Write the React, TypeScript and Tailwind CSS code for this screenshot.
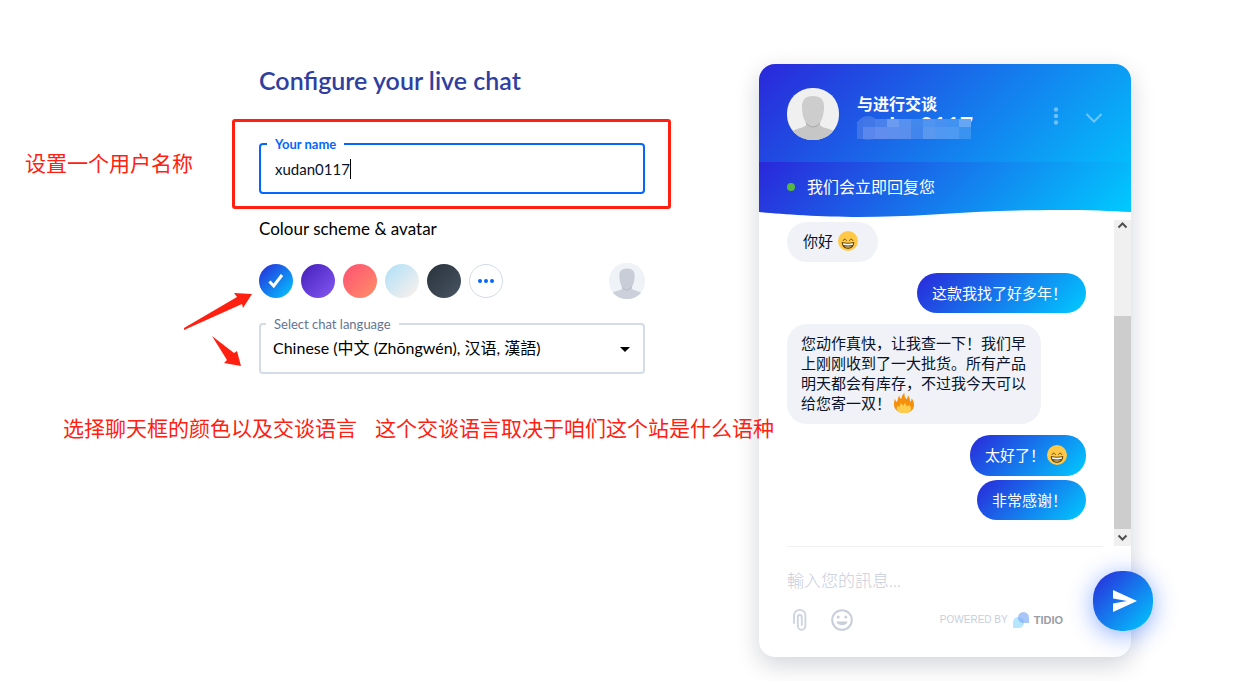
import { ReactNode } from 'react';

const GRADIENT = 'bg-[linear-gradient(135deg,#2a27da_0%,#00ccff_100%)]';

function GrinEmoji() {
  return (
    <svg viewBox="0 0 20 20" className="h-5 w-5 shrink-0" role="img" aria-label="笑脸">
      <circle cx="10" cy="10" r="10" fill="#ffc947" />
      <path d="M5.200 9.400c.5-1.700 2.600-1.700 3.200 0M11.600 9.400c.6-1.700 2.700-1.700 3.200 0" fill="none" stroke="#664500" strokeWidth="1" strokeLinecap="round" />
      <path d="M3.800 11c3.600.9 8.800.9 12.400 0 .2 4.200-2.400 6.800-6.200 6.800s-6.400-2.600-6.200-6.800z" fill="#664500" />
      <path d="M4.900 12.200c3.200.6 7 .6 10.200 0l-.5 1.900c-3 .5-6.200.5-9.200 0z" fill="#fff" />
      <path d="M6.400 15.200c2.400.4 4.800.4 7.200 0-1.600 1.800-5.600 1.800-7.200 0z" fill="#e8d9bd" />
    </svg>
  );
}

function FireEmoji() {
  return (
    <svg viewBox="0 0 20 20" className="h-5 w-5 shrink-0" role="img" aria-label="火">
      <path d="M10 20C4 20 0 16.500 0 11.600 0 9.500.2 7.500 1 5.600c.3 1.700.9 2.900 2 3.500C4 7 3.400 4.600 5.400 2.400c.1 1.600.7 3 1.800 3.400C8.200 4.500 7.600 1.800 10.600 0c-.5 2.600.3 4.400 1.900 6.200 1-1 1.400-2.300 1.200-4 2 1.700 2.300 4.200 2.300 6.600 1.200-.6 1.600-1.800 1.600-3.400C19.300 7 20 9.500 20 12c0 4.800-4 8-10 8z" fill="#f4900c" />
      <path d="M10 20c-4 0-7.300-1.600-7.300-4.600 0-1.200.4-2.200 1.100-3 .4.900 1 1.300 1.900 1.300.1-1.600.3-2.800 1.500-3.800.4 1.300 1.200 2 2.300 2.500.7-.7 1-1.500.9-2.400 1.400.9 2.200 2.200 2.400 3.600.9-.2 1.500-.7 1.900-1.600 1.400 1 2.500 2 2.500 3.400 0 3-3.200 4.600-7.200 4.600z" fill="#ffcc4d" />
    </svg>
  );
}

function Person({ bg, head, body, className }: { bg: string; head: string; body: string; className: string }) {
  return (
    <svg viewBox="0 0 52 52" className={className} aria-hidden="true">
      <clipPath id={'clip' + head.slice(1)}>
        <rect width="52" height="52" rx="25" />
      </clipPath>
      <g clipPath={`url(#clip${head.slice(1)})`}>
        <rect width="52" height="52" fill={bg} />
        <path d="M5 43c6-3 12-3 14-6v-5h14v5c2 3 8 3 14 6v9H5z" fill={body} />
        <path d="M26 8c8 0 11.500 4 11 12-.4 7-1.500 11-4 14.500-3 5-11 5-14 0C16.500 31 15.400 27 15 20 14.500 12 18 8 26 8z" fill={head} />
        <path d="M19 34.500c4 6 10 6 14 0" fill="none" stroke="#000" strokeOpacity=".15" />
      </g>
    </svg>
  );
}

function Received({ children }: { children: ReactNode }) {
  return <div className="max-w-[254px] self-start rounded-[20px] bg-[#f0f2f7] px-[14px] pt-[9px] pb-[11px] text-[15px] leading-5 text-[#06132b]">{children}</div>;
}

function Sent({ children }: { children: ReactNode }) {
  return <div className={`${GRADIENT} flex min-h-10 items-center gap-[2px] self-end rounded-[20px] pr-[19px] pb-px pl-[15px] text-[15px] leading-5 text-white`}>{children}</div>;
}

const swatches = [
  { name: 'Violet', css: 'bg-[linear-gradient(135deg,#431dba,#855af2)]' },
  { name: 'Coral', css: 'bg-[linear-gradient(135deg,#ff5073,#ff9068)]' },
  { name: 'Sky', css: 'bg-[linear-gradient(135deg,#ace0f9,#fff1eb)]' },
  { name: 'Slate', css: 'bg-[linear-gradient(135deg,#29323c,#485563)]' },
];

const mosaicTop = ['#4277e8', '#4a80ea', '#6b9bf1', '#5890ef', '#4288ed', '#4f94f0', '#4891f0', '#4292f1', '#65a6f5'];
const mosaicBottom = ['#5b86ec', '#628dee', '#5f8fee', '#5a8fee', '#4285ec', '#5a98f0', '#5098f1', '#4c9af2', '#3a92f1'];

function ConfigForm() {
  return (
    <form className="w-[439px]" onSubmit={(e) => e.preventDefault()}>
      <h1 className="pl-[27px] text-[25px] leading-8 font-semibold text-[#303f9f]">Configure your live chat</h1>
      <div className="mt-[23px] rounded-[3px] border-3 border-[#ff2011] pt-[13px] pr-[23px] pb-3 pl-6">
        <fieldset className="h-[59px] rounded-[4px] border-2 border-[#0566ff] px-[6px]">
          <legend className="px-2 text-[13px] leading-[18px] font-bold text-[#0566ff]">
            <label htmlFor="name">Your name</label>
          </legend>
          <div className="flex items-center px-2 pt-1">
            <input id="name" defaultValue="xudan0117" autoComplete="off" className="field-sizing-content bg-transparent text-[15px] leading-6 text-[#06132b] outline-none" />
            <span className="h-5 w-px bg-black" />
          </div>
        </fieldset>
      </div>
      <div className="pr-[26px] pl-[27px]">
        <h2 className="mt-2 text-[17px] leading-6 text-black">Colour scheme &amp; avatar</h2>
        <div className="mt-[22px] flex items-center gap-2">
          <button type="button" aria-label="Blue" className={`${GRADIENT} flex h-[34px] w-[34px] items-center justify-center rounded-full`}>
            <svg viewBox="0 0 16 16" className="h-4 w-4" fill="none" stroke="#fff" strokeWidth="3">
              <path d="M1.500 8.500l4.200 4.500L14 2" />
            </svg>
          </button>
          {swatches.map((s) => (
            <button key={s.name} type="button" aria-label={s.name} className={`${s.css} h-[34px] w-[34px] rounded-full`} />
          ))}
          <button type="button" aria-label="More colours" className="flex h-[34px] w-[34px] items-center justify-center gap-[2px] rounded-full border border-[#d3dbe5]">
            <span className="h-1 w-1 rounded-full bg-[#0566ff]" />
            <span className="h-1 w-1 rounded-full bg-[#0566ff]" />
            <span className="h-1 w-1 rounded-full bg-[#0566ff]" />
          </button>
          <button type="button" aria-label="Avatar" className="ml-auto">
            <Person bg="#eff2f6" head="#c8cdd7" body="#cbd0da" className="h-9 w-9" />
          </button>
        </div>
        <fieldset className="relative mt-4 h-[59px] rounded-[4px] border-2 border-[#d3dbe5] px-[5px]">
          <legend className="px-2 text-[13px] leading-[18px] text-[#647491]">
            <label htmlFor="language">Select chat language</label>
          </legend>
          <select id="language" className="mt-[3px] w-full appearance-none bg-transparent px-[7px] text-base leading-6 text-black outline-none">
            <option>Chinese (中文 (Zhōngwén), 汉语, 漢語)</option>
          </select>
          <svg viewBox="0 0 10 5" className="pointer-events-none absolute top-[14px] right-[13px] h-[5px] w-[10px]">
            <path d="M0 0h10L5 5z" />
          </svg>
        </fieldset>
      </div>
    </form>
  );
}

function ChatHeader() {
  return (
    <header className="relative z-10 h-[148px] text-white">
      <div className={`${GRADIENT} flex h-[98px] items-start rounded-t-[16px] bg-[length:100%_148px] bg-no-repeat px-7 pt-6`}>
        <Person bg="#f0f0f0" head="#cdcdcd" body="#c6c6c6" className="h-[52px] w-[52px]" />
        <div className="ml-[18px] pt-1">
          <p className="text-base leading-6 font-bold">与进行交谈</p>
          <div className="relative h-6 w-[116px]">
            <p className="text-[23px] leading-[18px] font-bold">xudan0117</p>
            <svg viewBox="0 0 116 25" className="absolute top-0 left-0 h-[25px] w-[116px]">
              <circle cx="11" cy="12" r="12" fill="#3f74e8" />
              <rect x="0" y="7" width="114" height="16" fill="#3f74e8" />
              {mosaicTop.map((c, i) => (
                <rect key={c} x={6 + i * 12} y="3" width="12" height="8" fill={c} />
              ))}
              {mosaicBottom.map((c, i) => (
                <rect key={c} x={6 + i * 12} y="11" width="12" height="12" fill={c} />
              ))}
            </svg>
          </div>
        </div>
        <div className="ml-auto flex items-center gap-[26px] pt-[18px] opacity-40">
          <button type="button" aria-label="Options">
            <svg viewBox="0 0 6 20" className="h-5 w-[6px]" fill="#fff">
              <circle cx="3" cy="3.500" r="2.200" />
              <circle cx="3" cy="10" r="2.200" />
              <circle cx="3" cy="16.500" r="2.200" />
            </svg>
          </button>
          <button type="button" aria-label="Minimise" className="pt-1">
            <svg viewBox="0 0 18 12" className="h-3 w-[18px]" fill="none" stroke="#fff" strokeWidth="2">
              <path d="M1.500 2L9 9.500 16.500 2" />
            </svg>
          </button>
        </div>
      </div>
      <svg viewBox="0 0 372 55" preserveAspectRatio="none" className="absolute top-[98px] left-0 h-[55px] w-full" aria-hidden="true">
        <defs>
          <linearGradient id="wave" gradientUnits="userSpaceOnUse" x1="79" y1="-79" x2="293" y2="134">
            <stop offset="0" stopColor="#2a27da" />
            <stop offset="1" stopColor="#00ccff" />
          </linearGradient>
        </defs>
        <path d="M0 0H372V50C340 48 300 47 240 49C190 51 150 55 100 55C60 55 20 52 0 50Z" fill="url(#wave)" />
      </svg>
      <p className="relative flex h-[50px] items-center gap-3 px-7 text-base leading-6">
        <span className="h-2 w-2 rounded-full bg-[#58b743]" />
        我们会立即回复您
      </p>
    </header>
  );
}

function ChatWidget() {
  return (
    <section className="relative flex w-[372px] flex-col rounded-[16px] bg-white shadow-[0_8px_24px_rgba(0,18,46,0.18)]">
      <ChatHeader />
      <div className="flex h-[334px]">
        <div className="flex flex-1 flex-col px-7">
          <div className="mt-[10px] flex flex-col">
            <Received>
              <span className="flex items-center gap-[5px] pr-[6px] pl-[2px]">
                你好
                <GrinEmoji />
              </span>
            </Received>
          </div>
          <div className="mt-[11px] flex flex-col">
            <Sent>这款我找了好多年！</Sent>
          </div>
          <div className="mt-[11px] flex flex-col">
            <Received>
              您动作真快，让我查一下！我们早上刚刚收到了一大批货。所有产品明天都会有库存，不过我今天可以给您寄一双！
              <span className="ml-[3px] inline-block align-top">
                <FireEmoji />
              </span>
            </Received>
          </div>
          <div className="mt-[11px] flex flex-col gap-1">
            <Sent>
              太好了！
              <span className="py-[10px]">
                <GrinEmoji />
              </span>
            </Sent>
            <Sent>非常感谢！</Sent>
          </div>
        </div>
        <div className="mt-2 flex w-[17px] flex-col bg-[#f0f0f0]" aria-hidden="true">
          <svg viewBox="0 0 17 17" className="h-[17px]" fill="none" stroke="#505050" strokeWidth="2">
            <path d="M4.500 7.500l4-4 4 4" />
          </svg>
          <div className="mt-[79px] flex-1 bg-[#cdcdcd]" />
          <svg viewBox="0 0 17 17" className="h-[17px]" fill="none" stroke="#505050" strokeWidth="2">
            <path d="M4.500 6.500l4 4 4-4" />
          </svg>
        </div>
      </div>
      <div className="ml-7 w-[316px] border-t border-[#eef0f2] pt-[22px]">
        <input aria-label="訊息" placeholder="輸入您的訊息..." className="block w-[270px] text-[17px] leading-6 font-light outline-none placeholder:text-[#c9cedb]" />
        <div className="mt-[15px] flex items-center pb-[25px]">
          <button type="button" aria-label="附件" className="ml-[5px]">
            <svg viewBox="0 0 16 24" className="h-6 w-4" fill="none" stroke="#cdd3de" strokeWidth="1.800" strokeLinecap="round">
              <path d="M2 15V7.500a5.700 5.700 0 0 1 11.400 0V18a3.800 3.800 0 0 1-7.600 0V9a2 2 0 0 1 4 0V17" />
            </svg>
          </button>
          <button type="button" aria-label="表情" className="ml-[22px]">
            <svg viewBox="0 0 24 24" className="h-6 w-6">
              <circle cx="12" cy="12" r="9.800" fill="none" stroke="#c9cedb" strokeWidth="2" />
              <circle cx="8.200" cy="9" r="1.500" fill="#c9cedb" />
              <circle cx="15.800" cy="9" r="1.500" fill="#c9cedb" />
              <path d="M6.500 13.500h11c-1 5-10 5-11 0z" fill="#c9cedb" />
            </svg>
          </button>
          <a href="#tidio" className="ml-auto flex items-center pr-10 font-['Liberation_Sans',sans-serif] text-[10px] leading-4 text-[#c9cedb]">
            POWERED BY
            <svg viewBox="0 0 16 16" className="mx-[5px] h-4 w-4">
              <path d="M0 16v-5.500A5.500 5.500 0 1 1 5.500 16z" fill="#b5e6fd" />
              <path d="M16 11V5.500A5.500 5.500 0 1 0 10.500 11z" fill="#7ba7f8" fillOpacity=".65" />
            </svg>
            <span className="text-[11px] font-bold text-[#999da5]">TIDIO</span>
          </a>
        </div>
      </div>
      <button type="button" aria-label="發送" className={`${GRADIENT} absolute right-[-22px] bottom-[26px] flex h-[60px] w-[60px] items-center justify-center rounded-[28px] shadow-[0_4px_24px_rgba(0,77,255,0.45)]`}>
        <svg viewBox="0 0 24 22" className="ml-1 h-[22px] w-6" fill="#fff">
          <path d="M0 0l24 11L0 22v-8.500L14 11 0 8.500z" />
        </svg>
      </button>
    </section>
  );
}

export default function App() {
  return (
    <main className="flex items-start gap-[88px] bg-white pt-16 pb-6 font-[Lato,'Noto_Sans_CJK_SC',sans-serif]">
      <div className="relative z-20 w-[671px]">
        <div className="flex">
          <p className="w-[232px] pt-[83px] pl-[25px] text-[21px] leading-8 text-[#ff2011]">设置一个用户名称</p>
          <ConfigForm />
        </div>
        <svg viewBox="0 0 84 88" className="pointer-events-none absolute top-[221px] left-[176px] h-[88px] w-[84px]" fill="#ff2011" aria-hidden="true">
          <path d="M8 43L61 12 58 8 76 9 67 23 66 19 8 45z" />
          <path d="M36 51l22 17 3-2 4 15-17-3 3-3z" />
        </svg>
        <p className="mt-[38px] flex gap-[18px] pl-[63px] text-[21px] leading-8 whitespace-nowrap text-[#ff2011]">
          <span>选择聊天框的颜色以及交谈语言</span>
          <span>这个交谈语言取决于咱们这个站是什么语种</span>
        </p>
      </div>
      <ChatWidget />
    </main>
  );
}
